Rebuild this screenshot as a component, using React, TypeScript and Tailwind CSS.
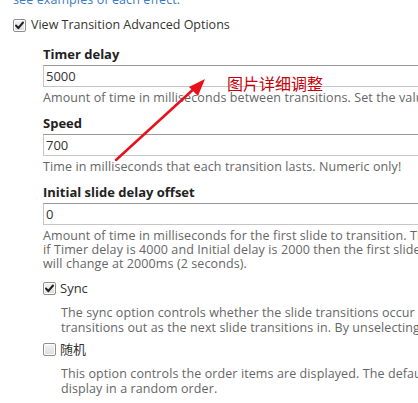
import React from "react";

const sans = "font-['Open_Sans','Noto_Sans_CJK_SC',sans-serif]";

function Check({ checked }: { checked: boolean }) {
  return (
    <span className="relative inline-block w-[13px] h-[13px] shrink-0 rounded-[2px] border border-[#8f8f8f] bg-gradient-to-b from-[#f4f4f4] to-[#dcdcdc] shadow-[inset_0_0_0_1px_#fff]">
      {checked && (
        <svg viewBox="0 0 13 13" className="absolute -left-px -top-px w-[13px] h-[13px]">
          <path d="M3 6.5 L5.3 9.2 L10 3.5" fill="none" stroke="#222" strokeWidth="2" strokeLinecap="round" strokeLinejoin="round" />
        </svg>
      )}
    </span>
  );
}

function Field({ label, value, desc }: { label: string; value: string; desc: string[] }) {
  return (
    <div className="flex flex-col">
      <div className="text-[13px] leading-[16px] font-bold text-[#222]">{label}</div>
      <div className="mt-[3px] h-[22px] w-[420px] border border-[#c6c6c6] border-t-[#999] bg-white pl-[2px] text-[13px] leading-[20px] text-[#333]">
        {value}
      </div>
      <div className="mt-[4px] text-[12.5px] leading-[14px] tracking-[0.1px] text-[#666] whitespace-nowrap">
        {desc.map((d) => (
          <div key={d}>{d}</div>
        ))}
      </div>
    </div>
  );
}

function Option({ checked, label, desc }: { checked: boolean; label: string; desc: string[] }) {
  return (
    <div className="flex flex-col">
      <div className="flex items-center gap-[4px]">
        <Check checked={checked} />
        <span className="text-[13px] leading-[16px] text-[#333]">{label}</span>
      </div>
      <div className="mt-[9px] pl-[18px] text-[12.5px] leading-[15px] tracking-[0.1px] text-[#666] whitespace-nowrap">
        {desc.map((d) => (
          <div key={d}>{d}</div>
        ))}
      </div>
    </div>
  );
}

export default function App() {
  return (
    <div className={`relative w-[418px] h-[403px] overflow-hidden bg-white ${sans}`}>
      <div className="pl-[13px]">
        <div className="-mt-[8px] text-[12.5px] leading-[15px] tracking-[0.1px] text-[#3b7bbf] whitespace-nowrap">
          see examples of each effect.
        </div>
        <div className="mt-[10px] flex items-center gap-[5px]">
          <Check checked />
          <span className="text-[12.5px] leading-[16px] text-[#333] whitespace-nowrap">
            View Transition Advanced Options
          </span>
        </div>
      </div>

      <div className="mt-[13px] pl-[43px] flex flex-col gap-[10px]">
        <Field
          label="Timer delay"
          value="5000"
          desc={["Amount of time in milliseconds between transitions. Set the value to 0 to not rotate automatically."]}
        />
        <Field
          label="Speed"
          value="700"
          desc={["Time in milliseconds that each transition lasts. Numeric only!"]}
        />
        <Field
          label="Initial slide delay offset"
          value="0"
          desc={[
            "Amount of time in milliseconds for the first slide to transition. This number will be added to Timer delay",
            "if Timer delay is 4000 and Initial delay is 2000 then the first slide will change at 6000ms (6 seconds).",
            "will change at 2000ms (2 seconds).",
          ]}
        />
        <div className="mt-[-1px] flex flex-col gap-[6px]">
          <Option
            checked
            label="Sync"
            desc={[
              "The sync option controls whether the slide transitions occur simultaneously.",
              "transitions out as the next slide transitions in. By unselecting this option",
            ]}
          />
          <Option
            checked={false}
            label="随机"
            desc={[
              "This option controls the order items are displayed. The default setting",
              "display in a random order.",
            ]}
          />
        </div>
      </div>

      <svg className="absolute left-0 top-0 pointer-events-none" width="418" height="403">
        <line x1="116" y1="160" x2="197" y2="86" stroke="#e8101a" strokeWidth="2.5" strokeLinecap="round" />
        <polygon points="205,79 189,87 198,96" fill="#e8101a" />
      </svg>
      <div className="absolute left-[227px] top-[73px] text-[16px] leading-[20px] text-[#c8000a] font-['Noto_Sans_CJK_SC',sans-serif]">
        图片详细调整
      </div>
    </div>
  );
}
